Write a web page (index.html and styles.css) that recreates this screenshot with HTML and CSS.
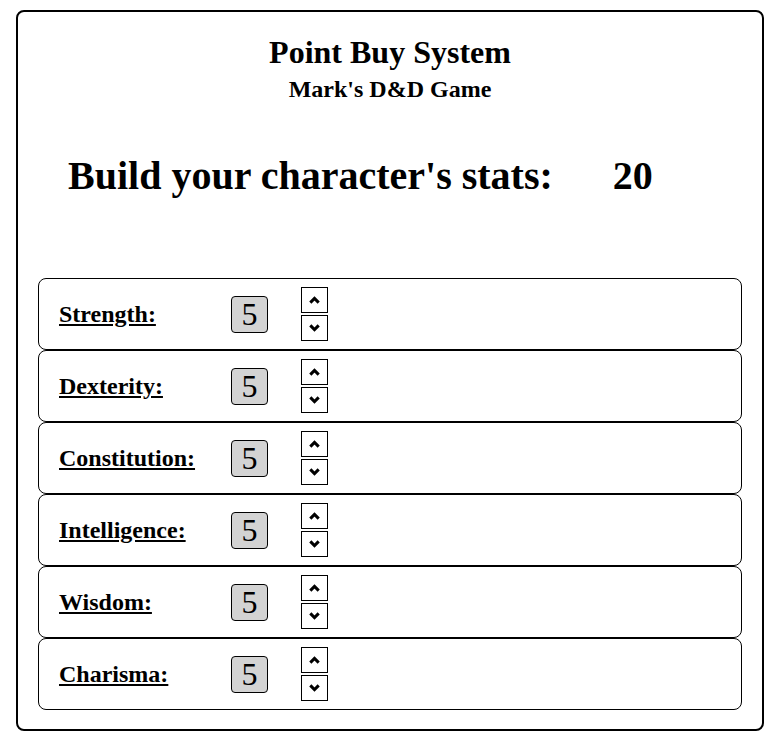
FILE: index.html
```html
<!DOCTYPE html>
<html>
<head>
<meta charset="utf-8">
<link rel="stylesheet" href="styles.css">
</head>
<body>
<div class="app">
  <header class="head">
    <h1 class="title">Point Buy System</h1>
    <h2 class="subtitle">Mark's D&amp;D Game</h2>
  </header>
  <div class="points">
    <span class="points-label">Build your character's stats:</span>
    <span class="points-value">20</span>
  </div>
  <div class="stats">
    <div class="stat">
      <span class="stat-name">Strength:</span>
      <span class="stat-value">5</span>
      <div class="arrows">
        <button class="arrow"><svg class="chev" viewBox="0 0 11 8" width="11" height="8"><path d="M1.3 6.6 L5.5 2.4 L9.7 6.6" fill="none" stroke="#000" stroke-width="3"/></svg></button>
        <button class="arrow"><svg class="chev" viewBox="0 0 11 8" width="11" height="8"><path d="M1.3 1.4 L5.5 5.6 L9.7 1.4" fill="none" stroke="#000" stroke-width="3"/></svg></button>
      </div>
    </div>
    <div class="stat">
      <span class="stat-name">Dexterity:</span>
      <span class="stat-value">5</span>
      <div class="arrows">
        <button class="arrow"><svg class="chev" viewBox="0 0 11 8" width="11" height="8"><path d="M1.3 6.6 L5.5 2.4 L9.7 6.6" fill="none" stroke="#000" stroke-width="3"/></svg></button>
        <button class="arrow"><svg class="chev" viewBox="0 0 11 8" width="11" height="8"><path d="M1.3 1.4 L5.5 5.6 L9.7 1.4" fill="none" stroke="#000" stroke-width="3"/></svg></button>
      </div>
    </div>
    <div class="stat">
      <span class="stat-name">Constitution:</span>
      <span class="stat-value">5</span>
      <div class="arrows">
        <button class="arrow"><svg class="chev" viewBox="0 0 11 8" width="11" height="8"><path d="M1.3 6.6 L5.5 2.4 L9.7 6.6" fill="none" stroke="#000" stroke-width="3"/></svg></button>
        <button class="arrow"><svg class="chev" viewBox="0 0 11 8" width="11" height="8"><path d="M1.3 1.4 L5.5 5.6 L9.7 1.4" fill="none" stroke="#000" stroke-width="3"/></svg></button>
      </div>
    </div>
    <div class="stat">
      <span class="stat-name">Intelligence:</span>
      <span class="stat-value">5</span>
      <div class="arrows">
        <button class="arrow"><svg class="chev" viewBox="0 0 11 8" width="11" height="8"><path d="M1.3 6.6 L5.5 2.4 L9.7 6.6" fill="none" stroke="#000" stroke-width="3"/></svg></button>
        <button class="arrow"><svg class="chev" viewBox="0 0 11 8" width="11" height="8"><path d="M1.3 1.4 L5.5 5.6 L9.7 1.4" fill="none" stroke="#000" stroke-width="3"/></svg></button>
      </div>
    </div>
    <div class="stat">
      <span class="stat-name">Wisdom:</span>
      <span class="stat-value">5</span>
      <div class="arrows">
        <button class="arrow"><svg class="chev" viewBox="0 0 11 8" width="11" height="8"><path d="M1.3 6.6 L5.5 2.4 L9.7 6.6" fill="none" stroke="#000" stroke-width="3"/></svg></button>
        <button class="arrow"><svg class="chev" viewBox="0 0 11 8" width="11" height="8"><path d="M1.3 1.4 L5.5 5.6 L9.7 1.4" fill="none" stroke="#000" stroke-width="3"/></svg></button>
      </div>
    </div>
    <div class="stat">
      <span class="stat-name">Charisma:</span>
      <span class="stat-value">5</span>
      <div class="arrows">
        <button class="arrow"><svg class="chev" viewBox="0 0 11 8" width="11" height="8"><path d="M1.3 6.6 L5.5 2.4 L9.7 6.6" fill="none" stroke="#000" stroke-width="3"/></svg></button>
        <button class="arrow"><svg class="chev" viewBox="0 0 11 8" width="11" height="8"><path d="M1.3 1.4 L5.5 5.6 L9.7 1.4" fill="none" stroke="#000" stroke-width="3"/></svg></button>
      </div>
    </div>
  </div>
</div>
</body>
</html>
```
FILE: styles.css
```css
* { box-sizing: border-box; }
body {
  margin: 0;
  background: #fff;
  font-family: "Liberation Serif", "Times New Roman", serif;
  color: #000;
}
.app {
  margin: 10px 16px 0 16px;
  width: 748px;
  border: 2px solid #000;
  border-radius: 8px;
  padding: 22px 20px 19px 20px;
}
.head {
  text-align: center;
}
.title {
  margin: 0;
  font-size: 32px;
  line-height: 37px;
  font-weight: bold;
}
.subtitle {
  margin: 4px 0 0 0;
  font-size: 24px;
  line-height: 28px;
  font-weight: bold;
}
.points {
  display: flex;
  gap: 60px;
  padding-left: 30px;
  margin-top: 50px;
  font-size: 40px;
  line-height: 46px;
  font-weight: bold;
}
.stats {
  margin-top: 79px;
  display: flex;
  flex-direction: column;
}
.stat {
  height: 72px;
  border: 1px solid #000;
  border-radius: 8px;
  display: flex;
  align-items: center;
  padding-left: 20px;
}
.stat-name {
  width: 172px;
  font-size: 24px;
  font-weight: bold;
  text-decoration: underline;
}
.stat-value {
  width: 37px;
  height: 37px;
  background: #d3d3d3;
  border: 1px solid #000;
  border-radius: 4px;
  font-family: "Liberation Serif", "Times New Roman", serif;
  font-size: 32px;
  line-height: 35px;
  text-align: center;
}
.arrows {
  margin-left: 33px;
  display: flex;
  flex-direction: column;
  gap: 2px;
}
.arrow {
  width: 27px;
  height: 26px;
  padding: 0;
  margin: 0;
  border: 1px solid #000;
  background: #fff;
  display: flex;
  align-items: center;
  justify-content: center;
}
.chev {
  display: block;
  flex: none;
  width: 11px;
  height: 8px;
}
```
